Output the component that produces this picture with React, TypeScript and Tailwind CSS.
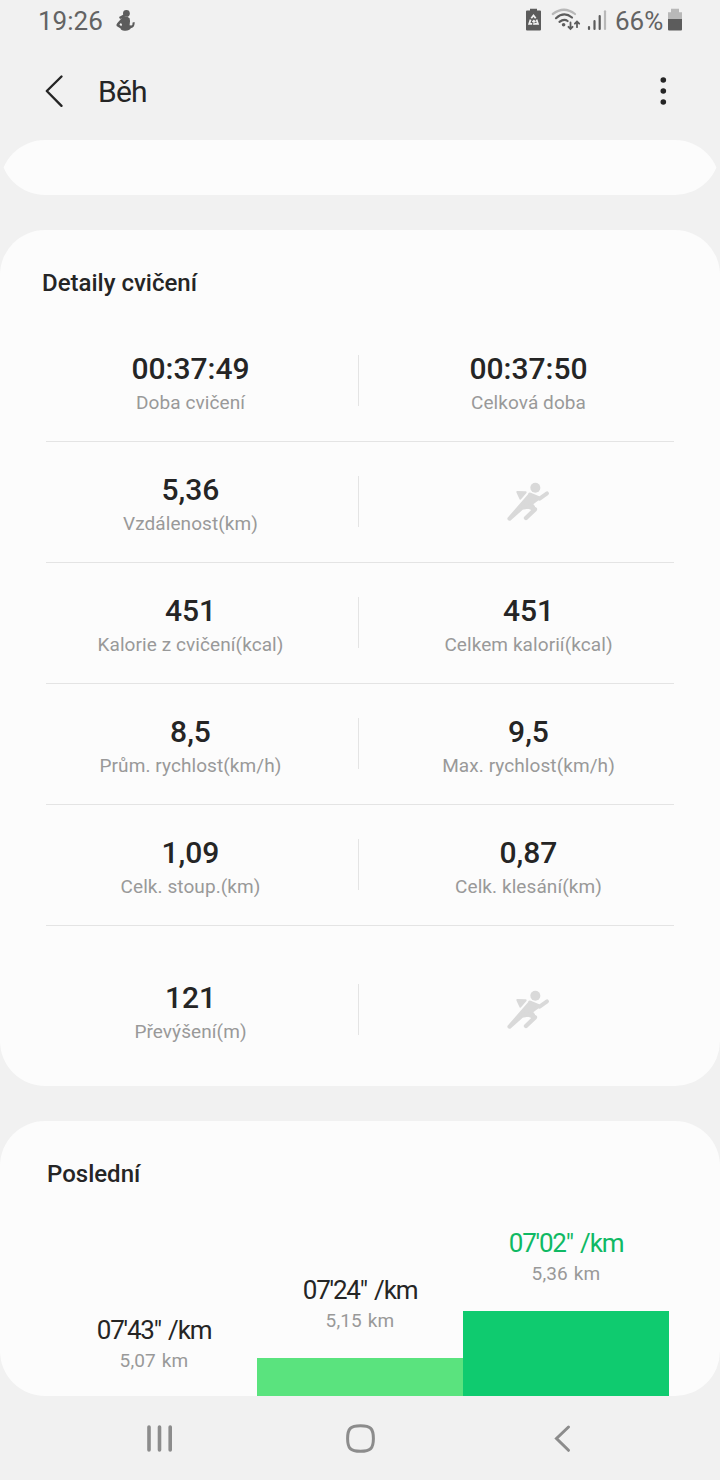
import React from "react";

type Metric = { value: string; label: string } | null;

const rows: [Metric, Metric][] = [
  [{ value: "00:37:49", label: "Doba cvičení" }, { value: "00:37:50", label: "Celková doba" }],
  [{ value: "5,36", label: "Vzdálenost(km)" }, null],
  [{ value: "451", label: "Kalorie z cvičení(kcal)" }, { value: "451", label: "Celkem kalorií(kcal)" }],
  [{ value: "8,5", label: "Prům. rychlost(km/h)" }, { value: "9,5", label: "Max. rychlost(km/h)" }],
  [{ value: "1,09", label: "Celk. stoup.(km)" }, { value: "0,87", label: "Celk. klesání(km)" }],
];

const lastRow: [Metric, Metric] = [{ value: "121", label: "Převýšení(m)" }, null];

function Runner() {
  return (
    <svg width="80" height="70" viewBox="0 0 240 210" className="mt-[28px] ml-[3px]" fill="#d9d9d9" stroke="#d9d9d9" strokeLinecap="round" strokeLinejoin="round">
      <circle cx="136" cy="53" r="15" stroke="none" />
      <path d="M82 66 L107 67 L91 86 Z" strokeWidth="6" />
      <path d="M120 74 L149 86 L171 70" fill="none" strokeWidth="12" />
      <path d="M119 72 L55 145 Q55 150 60 149 L97 116 L132 110 L126 102 L147 86 Z" strokeWidth="6" />
      <path d="M110 107 L135 118 L108 144" fill="none" strokeWidth="13" />
    </svg>
  );
}

function Cell({ metric }: { metric: Metric }) {
  if (!metric) return <div className="flex w-[337px] justify-center"><Runner /></div>;
  return (
    <div className="flex w-[337px] flex-col items-center gap-[6px] pt-[31px]">
      <div className="text-[30px] leading-[34px] font-medium text-[#252525]">{metric.value}</div>
      <div className="text-[19px] leading-[22px] tracking-[0.08px] text-[#999999]">{metric.label}</div>
    </div>
  );
}

function MetricRow({ row }: { row: [Metric, Metric] }) {
  return (
    <div className="flex h-[120px] px-[22px]">
      <Cell metric={row[0]} />
      <div className="mt-[34px] -ml-px h-[51px] w-px bg-[#e4e4e4]" />
      <div className="ml-px flex">
        <Cell metric={row[1]} />
      </div>
    </div>
  );
}

function StatusBar() {
  return (
    <div className="flex h-[40px] items-center justify-between pr-[37px] pl-[38px] text-[26px] leading-[30px] text-[#636363]">
      <div className="flex items-center">
        <span className="w-[66px] pt-[2px] whitespace-nowrap">19:26</span>
        <svg width="22" height="24" viewBox="114 8 22 24" className="ml-[10px]" fill="#5c5c5c">
          <circle cx="126.4" cy="13.4" r="3.4" />
          <path d="M123.5 14.6 L119 17 L120 19 L125.5 17.3 Z" />
          <path d="M121.6 18.2 Q126 15.5 129.6 18.2 Q130.6 21 129.6 25.3 L131.3 25.6 Q132.8 25 132.6 22.4 L134.6 22 Q135.2 27.2 130.8 28.3 Q129.5 31 124.5 30.7 Q120.8 30.7 120.6 28.6 L116.6 26 Q116 24.6 117.4 23 Z M120.8 23 L119.4 24.8 L121.4 26.3 L122 24.2 Z" fillRule="evenodd" />
        </svg>
      </div>
      <div className="flex items-center">
        <svg width="94" height="30" viewBox="520 5 94 30">
          <path d="M526 11.5 Q526 10.5 527 10.5 H530 V8.7 H537 V10.5 H540 Q541 10.5 541 11.5 V29.5 Q541 30.5 540 30.5 H527 Q526 30.5 526 29.5 Z" fill="#5c5c5c" />
          <g fill="none" stroke="#f1f1f1" strokeWidth="1.8">
            <path d="M531.3 18.2 L533.5 15.5 L535.7 18.2" />
            <path d="M530.6 19.6 L529.2 23.8 H532.2" />
            <path d="M536.5 19.6 L537.9 23.8 H534.2" />
            <path d="M533.9 25 V20.6 M532.3 22 L533.9 20.4 L535.5 22" strokeWidth="1.2" />
          </g>
          <g fill="none" strokeWidth="2.2" strokeLinecap="round">
            <path d="M552.8 14 Q564 5.5 575 14" stroke="#b8b8b8" />
            <path d="M556 18.2 Q564 11 572 17.5" stroke="#5c5c5c" />
            <path d="M559.5 21.9 Q564 18.2 567.6 21" stroke="#5c5c5c" />
            <path d="M570.5 22.5 V28.8 M568.4 26.8 L570.5 28.9 L572.6 26.8 M577 27.2 V21.6 M574.9 23.7 L577 21.5 L579.2 23.7" stroke="#5c5c5c" strokeWidth="1.8" />
            <path d="M589 27 V29 M594.5 21.2 V29 M599.7 16 V29" stroke="#5c5c5c" />
            <path d="M605 11.3 V29" stroke="#b8b8b8" />
          </g>
          <circle cx="563.6" cy="24.8" r="1.8" fill="#5c5c5c" />
        </svg>
        <span className="ml-px w-[51px] pt-[2px] whitespace-nowrap">66%</span>
        <svg width="16" height="24" viewBox="667 8 16 24" className="ml-px">
          <path d="M668 12.3 H671 V8.7 H679 V12.3 H682 V19.2 H668 Z" fill="#b8b8b8" />
          <path d="M668 19 H682 V29.5 Q682 30.5 681 30.5 H669 Q668 30.5 668 29.5 Z" fill="#5c5c5c" />
        </svg>
      </div>
    </div>
  );
}

function Header() {
  return (
    <div className="flex h-[100px] items-start pt-[31px] pr-[47px] pl-[44px]">
      <svg width="22" height="40" viewBox="44 71 22 40" fill="none" stroke="#252525" strokeWidth="2.4" strokeLinecap="round" strokeLinejoin="round">
        <path d="M61.5 76.5 L46.8 91 L61.5 105.8" />
      </svg>
      <h1 className="mt-px ml-[32px] flex-1 text-[30px] leading-[40px] tracking-[-0.8px] text-[#252525]">Běh</h1>
      <svg width="20" height="40" viewBox="653 71 20 40" fill="#252525">
        <circle cx="663.3" cy="80" r="2.8" />
        <circle cx="663.3" cy="91" r="2.8" />
        <circle cx="663.3" cy="102" r="2.8" />
      </svg>
    </div>
  );
}

function Split({ pace, distance, color, bar }: { pace: string; distance: string; color: string; bar: string }) {
  return (
    <div className="flex w-[206px] flex-col items-center">
      <div className={`text-[26px] leading-[30px] tracking-[-1.2px] [word-spacing:2px] ${color}`}>{pace}</div>
      <div className="mt-[5px] text-[19px] leading-[22px] tracking-[0.15px] [word-spacing:1px] text-[#999999]">{distance}</div>
      <div className={`w-full ${bar}`} />
    </div>
  );
}

export default function App() {
  return (
    <div className="flex h-[1480px] w-[720px] flex-col overflow-hidden bg-[#f1f1f1] font-['Roboto',sans-serif]">
      <StatusBar />
      <Header />
      <div className="h-[55px] shrink-0 overflow-hidden rounded-t-[45px]">
        <div className="h-full rounded-b-[45px] bg-[#fcfcfc]" />
      </div>
      <section className="mt-[35px] h-[856px] shrink-0 rounded-[45px] bg-[#fcfcfc]">
        <h2 className="h-[91px] pt-[38px] pl-[42px] text-[24px] leading-[30px] font-medium text-[#252525]">Detaily cvičení</h2>
        {rows.map((row, i) => (
          <div key={i}>
            <MetricRow row={row} />
            <div className="mx-[46px] h-px bg-[#e4e4e4]" />
          </div>
        ))}
        <div className="pt-[24px]">
          <MetricRow row={lastRow} />
        </div>
      </section>
      <section className="mt-[35px] flex h-[275px] shrink-0 flex-col overflow-hidden rounded-[45px] bg-[#fcfcfc]">
        <h2 className="pt-[38px] pl-[47px] text-[24px] leading-[30px] font-medium text-[#252525]">Poslední</h2>
        <div className="flex flex-1 items-end pl-[51px]">
          <Split pace={"07'43\" /km"} distance="5,07 km" color="text-[#252525]" bar="h-[24px]" />
          <Split pace={"07'24\" /km"} distance="5,15 km" color="text-[#252525]" bar="mt-[26px] h-[38px] bg-[#5ae37e]" />
          <Split pace={"07'02\" /km"} distance="5,36 km" color="text-[#10b964]" bar="mt-[26px] h-[85px] bg-[#0fcb6f]" />
        </div>
      </section>
      <nav className="flex h-[84px] shrink-0 items-center justify-between pr-[144px] pl-[143px]">
        <svg width="34" height="40" viewBox="143 1418 34 40" stroke="#8c8c8c" strokeWidth="3.6" strokeLinecap="round">
          <path d="M149 1427 V1450 M159.5 1427 V1450 M170.2 1427 V1450" />
        </svg>
        <svg width="34" height="40" viewBox="345 1418 34 40" fill="none" stroke="#8c8c8c" strokeWidth="3">
          <path d="M360.5 1425.7 C370.5 1425.7 373.4 1428.5 373.4 1438.5 C373.4 1448.5 370.5 1451.3 360.5 1451.3 C350.5 1451.3 347.6 1448.5 347.6 1438.5 C347.6 1428.5 350.5 1425.7 360.5 1425.7 Z" />
        </svg>
        <svg width="30" height="40" viewBox="546 1418 30 40" fill="none" stroke="#8c8c8c" strokeWidth="3" strokeLinecap="round">
          <path d="M568.5 1427 L556.5 1438.5 L568.5 1450.3" />
        </svg>
      </nav>
    </div>
  );
}
